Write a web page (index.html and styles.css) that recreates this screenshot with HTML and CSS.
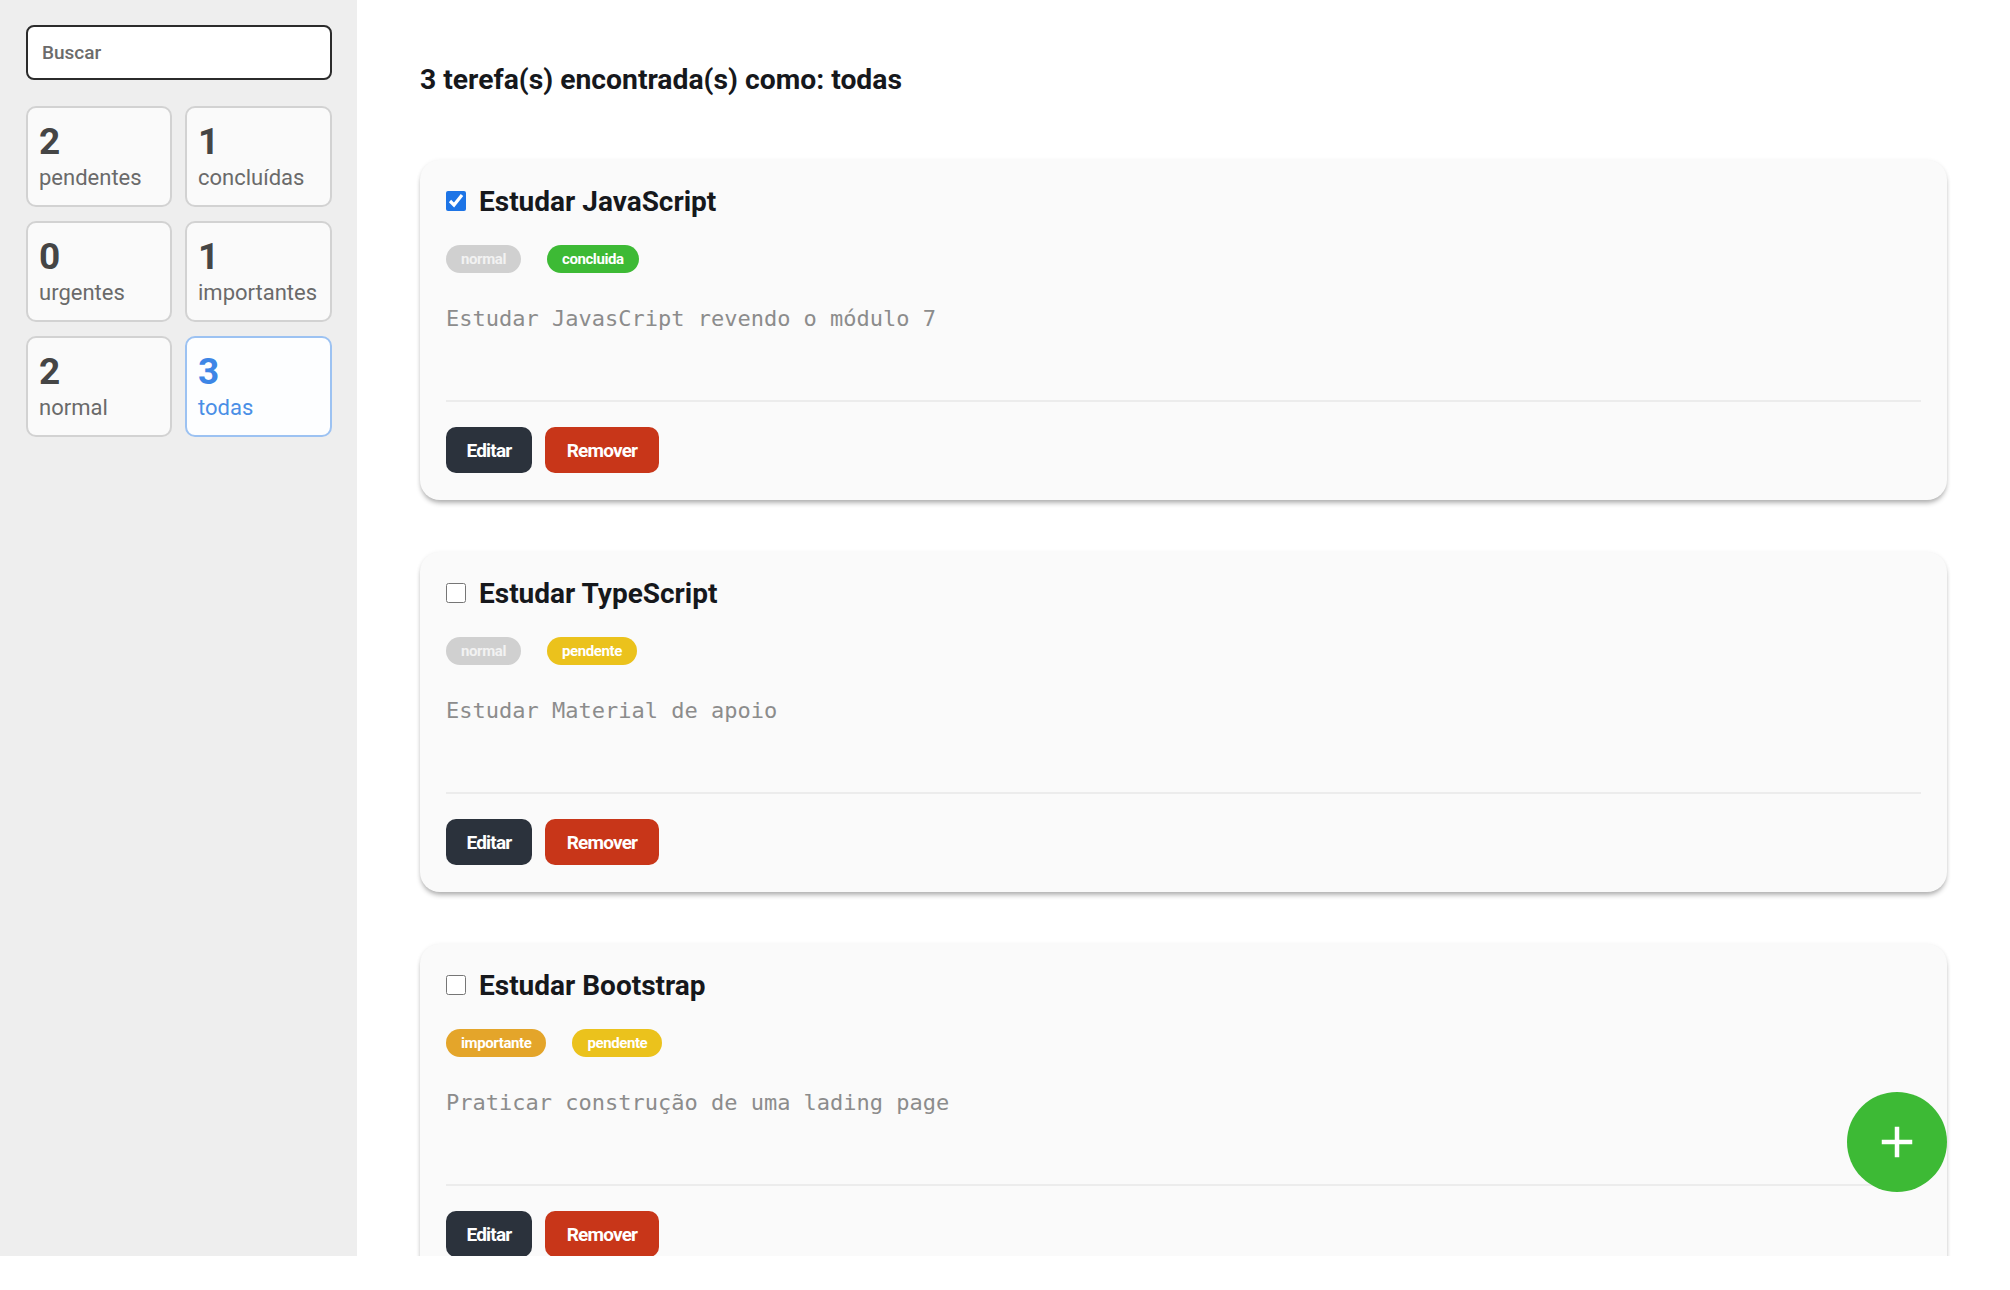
FILE: index.html
```html
<!DOCTYPE html>
<html lang="pt-BR">
<head>
<meta charset="utf-8">
<title>Tarefas</title>
<link rel="stylesheet" href="styles.css">
</head>
<body>
<div class="app">
  <aside class="sidebar">
    <input class="search" type="text" placeholder="Buscar">
    <div class="stats">
      <div class="stat"><span class="num">2</span><span class="label">pendentes</span></div>
      <div class="stat"><span class="num">1</span><span class="label">concluídas</span></div>
      <div class="stat"><span class="num">0</span><span class="label">urgentes</span></div>
      <div class="stat"><span class="num">1</span><span class="label">importantes</span></div>
      <div class="stat"><span class="num">2</span><span class="label">normal</span></div>
      <div class="stat active"><span class="num">3</span><span class="label">todas</span></div>
    </div>
  </aside>
  <main class="main">
    <h2 class="heading">3 terefa(s) encontrada(s) como: todas</h2>
    <div class="list">
      <article class="card">
        <label class="card-title"><input type="checkbox" checked> Estudar JavaScript</label>
        <div class="tags"><span class="tag tag-normal">normal</span><span class="tag tag-done">concluida</span></div>
        <p class="desc">Estudar JavasCript revendo o módulo 7</p>
        <div class="actions"><button class="btn btn-edit">Editar</button><button class="btn btn-remove">Remover</button></div>
      </article>
      <article class="card">
        <label class="card-title"><input type="checkbox"> Estudar TypeScript</label>
        <div class="tags"><span class="tag tag-normal">normal</span><span class="tag tag-pending">pendente</span></div>
        <p class="desc">Estudar Material de apoio</p>
        <div class="actions"><button class="btn btn-edit">Editar</button><button class="btn btn-remove">Remover</button></div>
      </article>
      <article class="card">
        <label class="card-title"><input type="checkbox"> Estudar Bootstrap</label>
        <div class="tags"><span class="tag tag-important">importante</span><span class="tag tag-pending">pendente</span></div>
        <p class="desc">Praticar construção de uma lading page</p>
        <div class="actions"><button class="btn btn-edit">Editar</button><button class="btn btn-remove">Remover</button></div>
      </article>
    </div>
    <button class="fab" aria-label="Adicionar">
      <svg width="34" height="34" viewBox="0 0 34 34"><path d="M17 4v26M4 17h26" stroke="#fff" stroke-width="4.5" stroke-linecap="square"/></svg>
    </button>
  </main>
</div>
</body>
</html>
```
FILE: styles.css
```css
* { box-sizing: border-box; }
html, body { margin: 0; padding: 0; background: #fff; }
body { font-family: Roboto, "Noto Sans", Arial, sans-serif; color: #1a1a1a; }

.app {
  display: flex;
  height: 1256px;
  overflow: hidden;
  position: relative;
}

.sidebar {
  width: 357px;
  flex: 0 0 357px;
  background: #eeeeee;
  padding: 25px 25px 0 26px;
}

.search {
  display: block;
  width: 306px;
  height: 55px;
  border: 2px solid #2b2b2b;
  border-radius: 8px;
  background: #fff;
  padding: 0 14px;
  font-family: Roboto, sans-serif;
  font-size: 19px;
  color: #333;
  outline: none;
}
.search::placeholder { color: #6b6b6b; font-weight: 500; }

.stats {
  margin-top: 26px;
  display: grid;
  grid-template-columns: 146px 147px;
  column-gap: 13px;
  row-gap: 14px;
}

.stat {
  height: 101px;
  border: 2px solid #d2d2d2;
  border-radius: 10px;
  background: #fafafa;
  padding: 12px 10px 0 11px;
  display: flex;
  flex-direction: column;
}
.stat .num {
  font-size: 37px;
  font-weight: 700;
  color: #454545;
  line-height: 44px;
}
.stat .label {
  font-size: 22px;
  color: #6a6a6a;
  line-height: 27px;
  white-space: nowrap;
}
.stat.active {
  border-color: #9cc2f2;
  background: #fdfeff;
}
.stat.active .num { color: #3d86e6; }
.stat.active .label { color: #4a8fe6; }

.main {
  flex: 1;
  padding: 0 63px;
  position: relative;
  overflow: hidden;
}

.heading {
  margin: 64px 0 0 0;
  font-size: 28.3px;
  font-weight: 700;
  line-height: 32px;
  color: #16181c;
}

.list {
  margin-top: 64px;
  display: flex;
  flex-direction: column;
  gap: 52px;
}

.card {
  background: #fafafa;
  border-radius: 20px;
  box-shadow: 0 4px 5px -1px rgba(0,0,0,0.3), 0 0 4px rgba(0,0,0,0.05);
  padding: 25px 26px 27px 26px;
  height: 340px;
  display: flex;
  flex-direction: column;
}

.card-title {
  display: flex;
  align-items: center;
  gap: 13px;
  font-size: 28px;
  font-weight: 700;
  color: #16181c;
  line-height: 34px;
}
.card-title input {
  width: 20px;
  height: 20px;
  margin: -2px 0 0 0;
  accent-color: #1d74e6;
}

.tags {
  margin-top: 26px;
  display: flex;
  gap: 26px;
}
.tag {
  height: 28px;
  line-height: 28px;
  padding: 0 15px;
  border-radius: 14px;
  font-size: 15px;
  font-weight: 700;
  letter-spacing: -0.4px;
  color: #fff;
}
.tag-normal { background: #d0d0d0; color: #f2f2f2; }
.tag-done { background: #3dba35; }
.tag-pending { background: #ebc21c; }
.tag-important { background: #e4a52a; }

.desc {
  margin: 32px 0 0 0;
  font-family: "DejaVu Sans Mono", "Liberation Mono", monospace;
  font-size: 22px;
  line-height: 28px;
  color: #8c8c8c;
  flex: 1;
  border-bottom: 2px solid #ececec;
}

.actions {
  margin-top: 25px;
  display: flex;
  gap: 13px;
}
.btn {
  height: 46px;
  border: none;
  border-radius: 10px;
  padding: 0 14px;
  font-family: Roboto, sans-serif;
  font-size: 19px;
  font-weight: 700;
  letter-spacing: -0.8px;
  color: #fff;
  cursor: pointer;
}
.btn-edit { background: #2b323c; width: 86px; }
.btn-remove { background: #c83619; width: 114px; }

.fab {
  position: absolute;
  right: 63px;
  bottom: 64px;
  width: 100px;
  height: 100px;
  border-radius: 50%;
  border: none;
  background: #3dba35;
  display: flex;
  align-items: center;
  justify-content: center;
  padding: 0;
  cursor: pointer;
}
```
